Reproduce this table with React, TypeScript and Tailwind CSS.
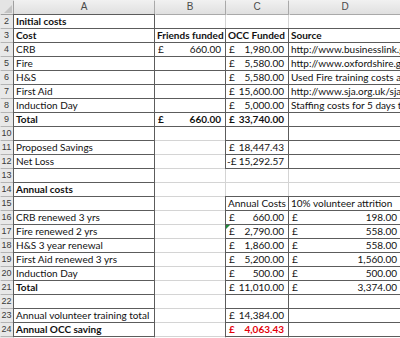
type Cell = {
  text?: string;
  money?: string;
  neg?: boolean;
  bold?: boolean;
  red?: boolean;
  box?: boolean;
  tick?: boolean;
};

type Row = { n: number; a?: Cell; b?: Cell; c?: Cell; d?: Cell };

const rows: Row[] = [
  { n: 2, a: { text: "Initial costs", bold: true, box: true } },
  {
    n: 3,
    a: { text: "Cost", bold: true, box: true },
    b: { text: "Friends funded", bold: true, box: true },
    c: { text: "OCC Funded", bold: true, box: true },
    d: { text: "Source", bold: true, box: true },
  },
  {
    n: 4,
    a: { text: "CRB", box: true },
    b: { money: "660.00", box: true },
    c: { money: "1,980.00", box: true },
    d: { text: "http://www.businesslink.gov.uk/bdotg", box: true },
  },
  {
    n: 5,
    a: { text: "Fire", box: true },
    b: { box: true },
    c: { money: "5,580.00", box: true },
    d: { text: "http://www.oxfordshire.gov.uk/wps", box: true },
  },
  {
    n: 6,
    a: { text: "H&S", box: true },
    b: { box: true },
    c: { money: "5,580.00", box: true },
    d: { text: "Used Fire training costs as a guide", box: true },
  },
  {
    n: 7,
    a: { text: "First Aid", box: true },
    b: { box: true },
    c: { money: "15,600.00", box: true },
    d: { text: "http://www.sja.org.uk/sja/training", box: true },
  },
  {
    n: 8,
    a: { text: "Induction Day", box: true },
    b: { box: true },
    c: { money: "5,000.00", box: true },
    d: { text: "Staffing costs for 5 days to deliver", box: true },
  },
  {
    n: 9,
    a: { text: "Total", bold: true, box: true },
    b: { money: "660.00", bold: true, box: true },
    c: { money: "33,740.00", bold: true, box: true },
    d: { box: true },
  },
  { n: 10, a: { box: true }, c: { box: true }, d: { box: true } },
  {
    n: 11,
    a: { text: "Proposed Savings", box: true },
    c: { money: "18,447.43", box: true },
    d: { box: true },
  },
  {
    n: 12,
    a: { text: "Net Loss", box: true },
    c: { money: "15,292.57", neg: true, box: true },
    d: { box: true },
  },
  { n: 13, a: { box: true } },
  { n: 14, a: { text: "Annual costs", bold: true, box: true } },
  {
    n: 15,
    a: { box: true },
    c: { text: "Annual Costs", box: true },
    d: { text: "10% volunteer attrition", box: true },
  },
  {
    n: 16,
    a: { text: "CRB renewed 3 yrs", box: true },
    c: { money: "660.00", box: true },
    d: { money: "198.00", box: true },
  },
  {
    n: 17,
    a: { text: "Fire renewed 2 yrs", box: true },
    c: { money: "2,790.00", box: true, tick: true },
    d: { money: "558.00", box: true },
  },
  {
    n: 18,
    a: { text: "H&S 3 year renewal", box: true },
    c: { money: "1,860.00", box: true },
    d: { money: "558.00", box: true },
  },
  {
    n: 19,
    a: { text: "First Aid renewed 3 yrs", box: true },
    c: { money: "5,200.00", box: true },
    d: { money: "1,560.00", box: true },
  },
  {
    n: 20,
    a: { text: "Induction Day", box: true },
    c: { money: "500.00", box: true },
    d: { money: "500.00", box: true },
  },
  {
    n: 21,
    a: { text: "Total", bold: true, box: true },
    c: { money: "11,010.00", box: true },
    d: { money: "3,374.00", box: true },
  },
  { n: 22, a: { box: true }, c: { box: true }, d: { box: true } },
  {
    n: 23,
    a: { text: "Annual volunteer training total", box: true },
    c: { money: "14,384.00", box: true },
    d: { box: true },
  },
  {
    n: 24,
    a: { text: "Annual OCC saving", bold: true, box: true },
    c: { money: "4,063.43", bold: true, red: true, box: true },
    d: { box: true },
  },
  { n: 25 },
];

function SheetCell({ cell }: { cell?: Cell }) {
  const c = cell ?? {};
  const base =
    "relative h-[13px] bg-white overflow-hidden whitespace-nowrap text-[10px] leading-[13px]";
  const box = c.box ? " shadow-[0_0_0_1px_#5c5c5c]" : "";
  const weight = c.bold ? " font-bold" : "";
  const color = c.red ? " text-[#e4000a]" : " text-[#111]";
  return (
    <div className={base + box + weight + color}>
      {c.tick && (
        <svg className="absolute left-0 top-0" width="4" height="4" viewBox="0 0 4 4">
          <polygon points="0,0 4,0 0,4" fill="#1e8a3a" />
        </svg>
      )}
      {c.money !== undefined ? (
        <div className={"flex justify-between pr-[4px] " + (c.neg ? "pl-[1px]" : "pl-[3px]")}>
          <span>{c.neg ? "-£" : "£"}</span>
          <span>{c.money}</span>
        </div>
      ) : (
        <div className="pl-[2px]">{c.text}</div>
      )}
    </div>
  );
}

export default function App() {
  return (
    <div className="w-[400px] h-[338px] overflow-hidden bg-white font-['Lato',sans-serif]">
      <div className="grid grid-cols-[13px_140px_70px_62px_112px] grid-rows-[14px] auto-rows-[13px] gap-px bg-[#d4d4d4]">
        {/* corner + column headers */}
        <div className="relative h-[14px] bg-[#e4e4e4] shadow-[1px_1px_0_#9f9f9f]">
          <svg className="absolute right-[1px] bottom-[1px]" width="8" height="8" viewBox="0 0 8 8">
            <polygon points="8,0 8,8 0,8" fill="#c4c4c4" />
          </svg>
        </div>
        {["A", "B", "C", "D"].map((l) => (
          <div
            key={l}
            className="h-[14px] bg-gradient-to-b from-[#f1f1f1] to-[#e0e0e0] shadow-[1px_1px_0_#a9a9a9] text-center text-[10px] leading-[14px] text-[#4a4a4a] font-['Liberation_Sans',sans-serif]"
          >
            {l}
          </div>
        ))}

        {rows.map((r) => (
          <div key={r.n} className="contents">
            <div className="h-[13px] bg-[#e8e8e8] shadow-[1px_1px_0_#b4b4b4] text-center text-[9px] leading-[13px] text-[#3a3a3a] font-['Liberation_Sans',sans-serif]">
              {r.n}
            </div>
            <SheetCell cell={r.a} />
            <SheetCell cell={r.b} />
            <SheetCell cell={r.c} />
            <SheetCell cell={r.d} />
          </div>
        ))}
      </div>
    </div>
  );
}
